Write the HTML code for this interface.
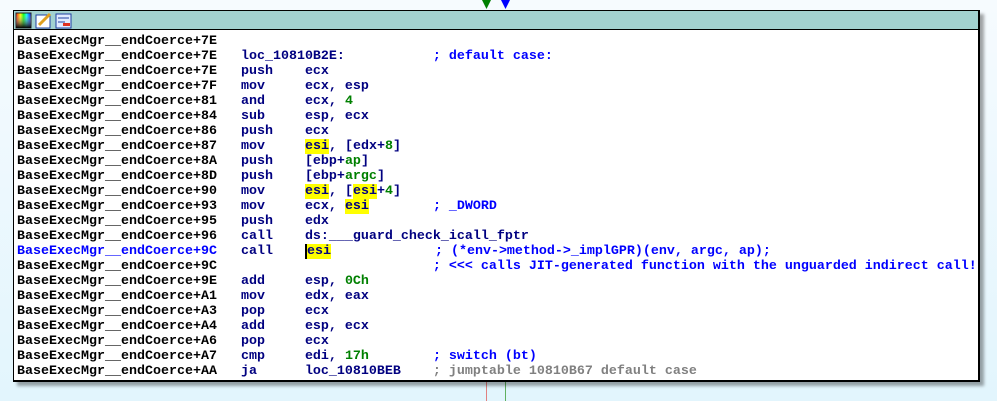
<!DOCTYPE html><html><head><style>
body{margin:0;width:997px;height:401px;overflow:hidden;background:linear-gradient(#f6fbfe,#e2f5fd);position:relative;font-family:"Liberation Mono",monospace;}
.box{position:absolute;left:13px;top:10px;width:964px;height:369px;border:1px solid #000;border-right-width:2px;border-bottom-width:2px;background:#fff;box-shadow:4px 4px 3px rgba(0,0,0,.35);}
.tb{height:18px;background:#a2d1d0;border-bottom:1px solid #000;position:relative}
.code{position:absolute;left:3px;top:23px;font-size:13.33px;font-weight:bold;line-height:15px;white-space:pre;color:#000}
.n{color:#000080}.g{color:#008000}.c{color:#0000ff}.gr{color:#808080}.h{background:#ffff00}.b{color:#0000ff}
.cur{border-left:2px solid #000}
</style></head><body>
<svg style="position:absolute;left:0;top:0" width="997" height="401">
<polygon points="482,0 491,0 486.5,9" fill="#008000"/>
<polygon points="501,0 510,0 505.5,9" fill="#0000ff"/>
<line x1="486.5" y1="381" x2="486.5" y2="401" stroke="#e08080" stroke-width="1"/>
<line x1="505.5" y1="381" x2="505.5" y2="401" stroke="#60b060" stroke-width="1"/>
</svg>
<div class="box"><div class="tb">
<svg width="80" height="18" style="position:absolute;left:1px;top:1px">
<defs><linearGradient id="r" x1="0" x2="1"><stop offset="0" stop-color="#f00"/><stop offset=".3" stop-color="#ff0"/><stop offset=".5" stop-color="#0f0"/><stop offset=".7" stop-color="#0ff"/><stop offset="1" stop-color="#00f"/></linearGradient><linearGradient id="d" x1="0" y1="0" x2="0" y2="1"><stop offset="0" stop-color="#fff" stop-opacity="0"/><stop offset="1" stop-color="#000"/></linearGradient></defs>
<rect x="1" y="1" width="15" height="15" fill="url(#r)" stroke="#222"/><rect x="1" y="1" width="15" height="15" fill="url(#d)"/>
<rect x="21" y="3" width="14" height="13" fill="#fff" stroke="#2040a0"/><line x1="24" y1="13" x2="35" y2="2" stroke="#e0a020" stroke-width="3"/>
<rect x="41" y="2" width="15" height="14" fill="#e0eaff" stroke="#2040a0"/><line x1="43" y1="6" x2="54" y2="6" stroke="#2040a0"/><line x1="43" y1="10" x2="50" y2="10" stroke="#2040a0"/><rect x="48" y="11" width="7" height="3" fill="#e03020"/>
</svg></div>
<div class="code">BaseExecMgr__endCoerce+7E
BaseExecMgr__endCoerce+7E   <span class="n">loc_10810B2E:</span>           <span class="c">; default case:</span>
BaseExecMgr__endCoerce+7E   <span class="n">push    ecx</span>
BaseExecMgr__endCoerce+7F   <span class="n">mov     ecx, esp</span>
BaseExecMgr__endCoerce+81   <span class="n">and     ecx, </span><span class="g">4</span>
BaseExecMgr__endCoerce+84   <span class="n">sub     esp, ecx</span>
BaseExecMgr__endCoerce+86   <span class="n">push    ecx</span>
BaseExecMgr__endCoerce+87   <span class="n">mov     <span class="h">esi</span>, [edx+<span class="g">8</span>]</span>
BaseExecMgr__endCoerce+8A   <span class="n">push    [ebp+<span class="g">ap</span>]</span>
BaseExecMgr__endCoerce+8D   <span class="n">push    [ebp+<span class="g">argc</span>]</span>
BaseExecMgr__endCoerce+90   <span class="n">mov     <span class="h">esi</span>, [<span class="h">esi</span>+<span class="g">4</span>]</span>
BaseExecMgr__endCoerce+93   <span class="n">mov     ecx, <span class="h">esi</span></span>        <span class="c">; _DWORD</span>
BaseExecMgr__endCoerce+95   <span class="n">push    edx</span>
BaseExecMgr__endCoerce+96   <span class="n">call    ds:___guard_check_icall_fptr</span>
<span class="b">BaseExecMgr__endCoerce+9C</span>   <span class="n">call    <span class="h cur">esi</span></span>             <span class="c">; (*env->method->_implGPR)(env, argc, ap);</span>
BaseExecMgr__endCoerce+9C                           <span class="c">; &lt;&lt;&lt; calls JIT-generated function with the unguarded indirect call!</span>
BaseExecMgr__endCoerce+9E   <span class="n">add     esp, </span><span class="g">0Ch</span>
BaseExecMgr__endCoerce+A1   <span class="n">mov     edx, eax</span>
BaseExecMgr__endCoerce+A3   <span class="n">pop     ecx</span>
BaseExecMgr__endCoerce+A4   <span class="n">add     esp, ecx</span>
BaseExecMgr__endCoerce+A6   <span class="n">pop     ecx</span>
BaseExecMgr__endCoerce+A7   <span class="n">cmp     edi, </span><span class="g">17h</span>        <span class="c">; switch (bt)</span>
BaseExecMgr__endCoerce+AA   <span class="n">ja      loc_10810BEB</span>    <span class="gr">; jumptable 10810B67 default case</span></div>
</div>
</body></html>
